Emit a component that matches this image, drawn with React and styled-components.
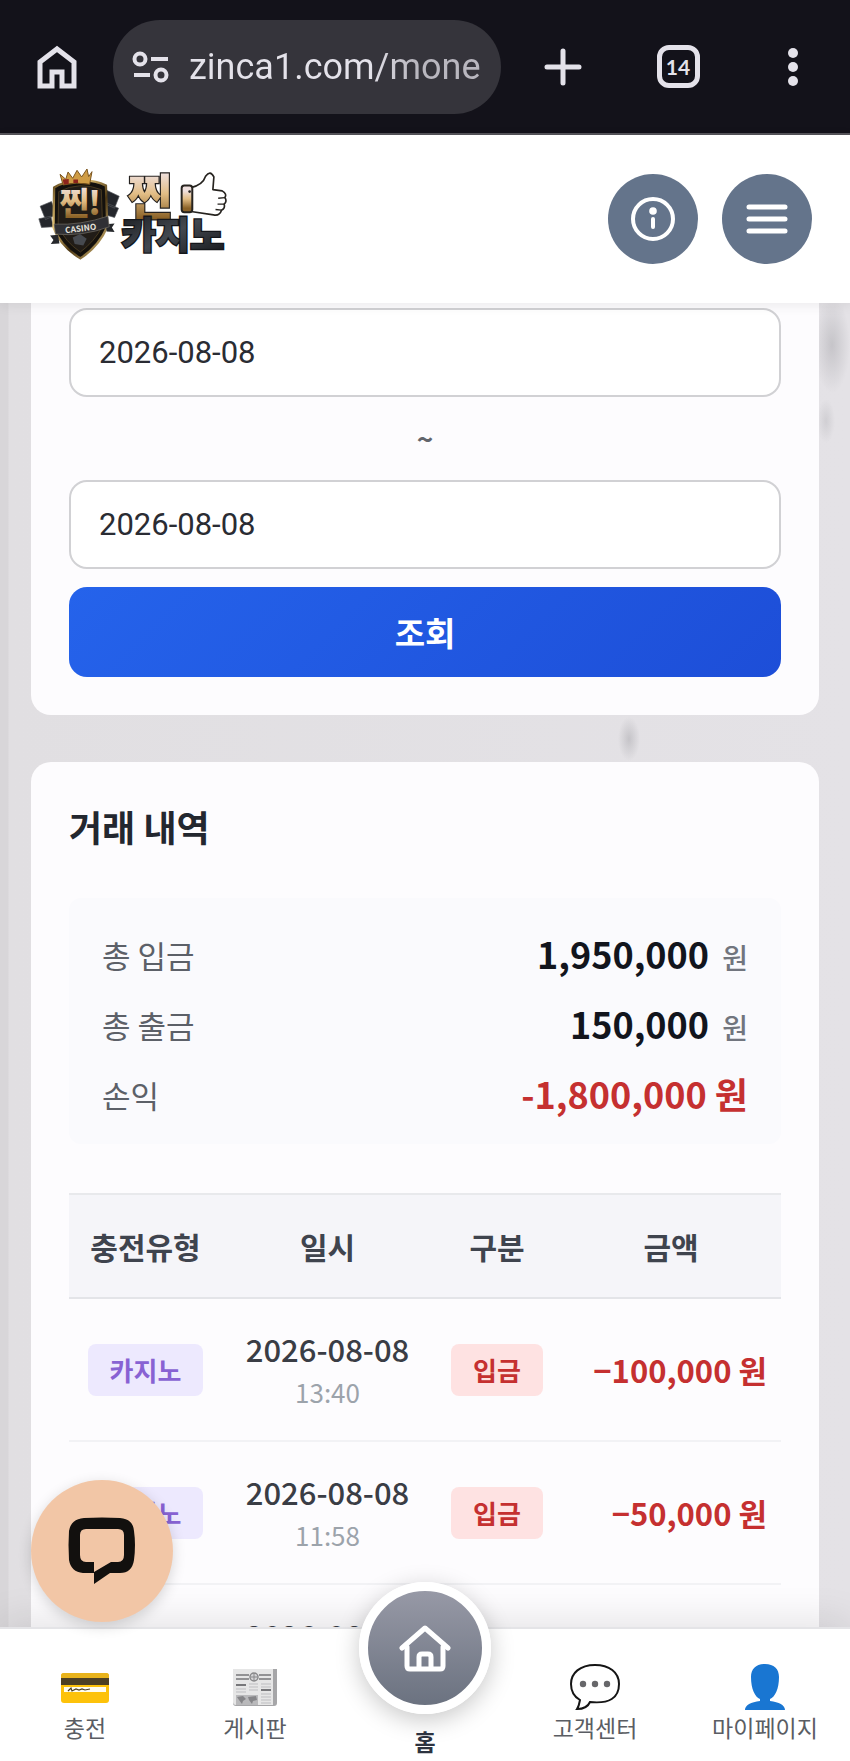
import React from 'react'
import styled, { createGlobalStyle } from 'styled-components'

const GlobalStyle = createGlobalStyle`
    * {
        box-sizing: border-box;
    }

    body {
        margin: 0;
        font-family: 'Noto Sans CJK KR', sans-serif;
        color: #23272f;
    }

    button, input {
        font-family: inherit;
    }
`

const Shell = styled.div`
    display: flex;
    flex-direction: column;
    height: 100vh;
    overflow: hidden;
`

const BrowserBar = styled.div`
    display: flex;
    flex-shrink: 0;
    align-items: center;
    height: 135px;
    padding: 0 35px;
    background: #13121a;
    border-bottom: 2px solid #55545a;
`

const BarButton = styled.button`
    display: flex;
    flex-shrink: 0;
    align-items: center;
    justify-content: center;
    width: 44px;
    height: 48px;
    padding: 0;
    border: none;
    background: none;
    color: #e4e2ea;
`

const AddressBar = styled.label`
    display: flex;
    flex: 1;
    align-items: center;
    gap: 20px;
    min-width: 0;
    height: 94px;
    margin: 0 40px 0 34px;
    padding: 0 12px 0 19px;
    border-radius: 47px;
    background: #35343b;
    color: #e4e2ea;
`

const Address = styled.input`
    flex: 1;
    min-width: 0;
    padding: 0;
    border: none;
    outline: none;
    background: linear-gradient(90deg, #e4e2ea 60%, #b9b7bf 75%);
    background-clip: text;
    color: transparent;
    font-family: Roboto, sans-serif;
    font-size: 36px;
    line-height: 48px;
`

const BarActions = styled.div`
    display: flex;
    justify-content: space-between;
    width: 274px;
`

const TabCount = styled.span`
    display: flex;
    align-items: center;
    justify-content: center;
    width: 43px;
    height: 43px;
    border: 5px solid #e4e2ea;
    border-radius: 12px;
    font-family: Lato, sans-serif;
    font-size: 21px;
    font-weight: 700;
`

const Header = styled.header`
    display: flex;
    z-index: 1;
    flex-shrink: 0;
    align-items: center;
    justify-content: space-between;
    height: 168px;
    padding: 0 38px 0 36px;
    background: #ffffff;
    box-shadow: 0 2px 12px rgba(0, 0, 0, 0.08);
`

const LogoLink = styled.a`
    display: flex;
    margin-bottom: 12px;
`

const HeaderActions = styled.div`
    display: flex;
    gap: 24px;
`

const RoundButton = styled.button`
    display: flex;
    align-items: center;
    justify-content: center;
    width: 90px;
    height: 90px;
    padding: 0;
    border: none;
    border-radius: 50%;
    background: #64748b;
`

const Main = styled.main`
    display: flex;
    flex: 1;
    flex-direction: column;
    gap: 47px;
    min-height: 0;
    overflow: hidden;
    padding: 0 31px;
    background:
        radial-gradient(ellipse 18px 48px at 832px 42px, rgba(120, 120, 126, 0.28), transparent),
        radial-gradient(ellipse 9px 22px at 826px 118px, rgba(120, 120, 126, 0.18), transparent),
        radial-gradient(ellipse 11px 22px at 629px 436px, rgba(120, 120, 126, 0.28), transparent),
        linear-gradient(90deg, #d8d6d9 8px, #e1dfe2 9px, #e4e2e6);
`

const Card = styled.section`
    flex-shrink: 0;
    padding: ${props => (props.$cut ? '5px 38px 38px' : '38px')};
    border-radius: ${props => (props.$cut ? '0 0 20px 20px' : '20px')};
    background: #fdfcfe;
`

const DateInput = styled.input`
    display: block;
    width: 100%;
    height: 89px;
    padding: 0 28px;
    border: 2px solid #d1d1d4;
    border-radius: 18px;
    outline: none;
    background: #ffffff;
    color: #2a2c33;
    font-family: Roboto, sans-serif;
    font-size: 31px;
`

const Tilde = styled.div`
    height: 83px;
    color: #62656c;
    font-size: 28px;
    font-weight: 700;
    line-height: 83px;
    text-align: center;
`

const SearchButton = styled.button`
    width: 100%;
    height: 90px;
    margin-top: 18px;
    border: none;
    border-radius: 18px;
    background: linear-gradient(135deg, #2563eb, #1d4ed8);
    color: #ffffff;
    font-size: 33px;
    font-weight: 700;
`

const Title = styled.h2`
    margin: 0 0 46px;
    color: #23272f;
    font-size: 36px;
    font-weight: 700;
    line-height: 52px;
`

const Summary = styled.dl`
    margin: 0 0 49px;
    padding: 20px 33px 16px;
    border-radius: 12px;
    background: #fafafd;
`

const SummaryRow = styled.div`
    display: flex;
    align-items: center;
    justify-content: space-between;
    height: 70px;
`

const SummaryLabel = styled.dt`
    padding-top: 2px;
    color: #5c6068;
    font-size: 31px;
`

const SummaryValue = styled.dd`
    margin: 0;
    color: ${props => (props.$loss ? '#c53030' : '#12151d')};
    font-size: 36px;
    font-weight: 700;
`

const Unit = styled.span`
    margin-left: 5px;
    color: #71757e;
    font-size: 28px;
    font-weight: 500;
`

const Table = styled.table`
    width: 100%;
    border-collapse: collapse;
    table-layout: fixed;
`

const HeadCell = styled.th`
    width: ${props => props.$width};
    height: 104px;
    padding: 0;
    border-top: 2px solid #e8e9ec;
    border-bottom: 2px solid #e3e4e8;
    background: #f5f5f9;
    color: #3f444e;
    font-size: 30px;
    font-weight: 700;
`

const Cell = styled.td`
    height: 143px;
    padding: ${props => (props.$end ? '0 14px 0 0' : '0')};
    border-bottom: 2px solid #f2f2f5;
    text-align: ${props => (props.$end ? 'right' : 'center')};
    white-space: nowrap;
`

const Badge = styled.span`
    display: inline-block;
    padding: 0 22px;
    border-radius: 8px;
    background: ${props => (props.$deposit ? '#fee2e2' : '#ede9fe')};
    color: ${props => (props.$deposit ? '#c53030' : '#8862d3')};
    font-size: 26px;
    font-weight: 700;
    line-height: 52px;
`

const DateText = styled.div`
    color: #3a3d45;
    font-size: 31px;
    font-weight: 500;
    line-height: 44px;
`

const TimeText = styled.div`
    color: #9ca3ab;
    font-size: 26px;
    line-height: 42px;
`

const Amount = styled.span`
    color: #c53030;
    font-size: 31px;
    font-weight: 700;
`

const ChatButton = styled.button`
    position: fixed;
    bottom: 139px;
    left: 31px;
    z-index: 2;
    display: flex;
    align-items: center;
    justify-content: center;
    width: 142px;
    height: 142px;
    padding: 0;
    border: none;
    border-radius: 50%;
    background: #f2c6a6;
    box-shadow: 0 4px 14px rgba(0, 0, 0, 0.16);
`

const BottomNav = styled.nav`
    display: grid;
    z-index: 1;
    flex-shrink: 0;
    grid-template-columns: repeat(5, 1fr);
    height: 134px;
    border-top: 2px solid #e4e4e7;
    background: #ffffff;
    box-shadow: 0 -6px 36px rgba(0, 0, 0, 0.1);
`

const NavItem = styled.a`
    display: flex;
    flex-direction: column;
    align-items: center;
    margin-top: ${props => (props.$active ? '-47px' : '35px')};
    color: ${props => (props.$active ? '#2d3340' : '#5a5d63')};
    font-size: 23px;
    font-weight: ${props => (props.$active ? 700 : 400)};
    line-height: 34px;
    text-decoration: none;
`

const HomeCircle = styled.span`
    display: flex;
    align-items: center;
    justify-content: center;
    width: 132px;
    height: 132px;
    margin-bottom: 10px;
    border: 9px solid #ffffff;
    border-radius: 50%;
    background: linear-gradient(#9799a6, #6b7280);
    box-shadow: 0 6px 24px rgba(0, 0, 0, 0.22);
`

const BarHomeIcon = () => (
    <svg width="40" height="44" viewBox="0 0 40 44" fill="none" stroke="currentColor" strokeWidth="5">
        <path d="M3 41V17L20 4l17 13v24H25V27H15v14z" />
    </svg>
)

const TuneIcon = () => (
    <svg width="37" height="32" viewBox="0 0 37 32" fill="none" stroke="currentColor" strokeWidth="4">
        <circle cx="8" cy="8" r="5.5" />
        <path d="M19 8h17M2 24h16" />
        <circle cx="29" cy="24" r="5.5" />
    </svg>
)

const PlusIcon = () => (
    <svg width="38" height="38" viewBox="0 0 38 38" stroke="currentColor" strokeWidth="5" strokeLinecap="round">
        <path d="M19 3v32M3 19h32" />
    </svg>
)

const DotsIcon = () => (
    <svg width="10" height="40" viewBox="0 0 10 40" fill="currentColor">
        <circle cx="5" cy="6" r="5" />
        <circle cx="5" cy="20" r="5" />
        <circle cx="5" cy="34" r="5" />
    </svg>
)

const InfoIcon = () => (
    <svg width="44" height="44" viewBox="0 0 44 44" fill="none" stroke="#ffffff" strokeWidth="4" strokeLinecap="round">
        <circle cx="22" cy="22" r="20" />
        <path d="M22 22v8" />
        <circle cx="22" cy="14" r="3.8" fill="#ffffff" stroke="none" />
    </svg>
)

const MenuIcon = () => (
    <svg width="42" height="30" viewBox="0 0 42 30" stroke="#ffffff" strokeWidth="5" strokeLinecap="round">
        <path d="M3 3h36M3 15h36M3 27h36" />
    </svg>
)

const HouseIcon = () => (
    <svg width="52" height="48" viewBox="0 0 52 48" fill="none" stroke="#ffffff" strokeWidth="5" strokeLinecap="round" strokeLinejoin="round">
        <path d="M3 24L26 4l23 20" />
        <path d="M8 23v19q0 3 3 3h30q3 0 3-3V23" />
        <path d="M20 44V33q0-3 3-3h6q3 0 3 3v11" />
    </svg>
)

const ChatIcon = () => (
    <svg width="68" height="68" viewBox="0 0 68 68">
        <path
            d="M16 1Q34 0 52 1Q65 2 66 14Q68 28 66 43Q64 56 52 56H42L26 67V56H15Q3 55 1 43Q0 28 1 14Q3 2 16 1Z"
            fill="#12100e"
        />
        <path d="M18 12H50Q56 12 56 18V38Q56 45 50 45H43L26 55V45H18Q12 45 12 38V18Q12 12 18 12Z" fill="#f2c6a6" />
    </svg>
)

const CardIcon = () => (
    <svg width="48" height="46" viewBox="0 0 48 46">
        <rect x="0" y="9" width="48" height="30" rx="3" fill="#fdc20a" />
        <path d="M0 15v-3q0-3 3-3h42q3 0 3 3v3z" fill="#e8b31c" />
        <path d="M0 14h48v7H0z" fill="#4d4024" />
        <path d="M3 23h42v5H3z" fill="#fffdf0" />
        <path d="M7 27l3-3 1 3 4-2 3 1 3-1 3 1 5-1" fill="none" stroke="#4d4024" strokeWidth="1.2" />
    </svg>
)

const NewsIcon = () => (
    <svg width="48" height="46" viewBox="0 0 48 46">
        <path d="M3 5h43v34q0 3-3 3H5q-3 0-3-3z" fill="#a6a6a8" />
        <path d="M2 5h40v36H5q-3 0-3-3z" fill="#e6e6e6" />
        <path d="M5 11h13M5 15h13M28 11h12M28 15h12" stroke="#929294" strokeWidth="2" />
        <circle cx="23" cy="13" r="4" fill="#d4d4d6" stroke="#88888a" strokeWidth="1.5" />
        <path d="M20 13h6M23 9v8" stroke="#88888a" />
        <path d="M5 21h10M30 26h10" stroke="#77777a" strokeWidth="2" />
        <path d="M18 20h9M18 23h9M18 26h9M30 20h10M30 23h10M5 25h10M5 28h10M30 30h10M30 33h10M30 36h10M30 39h10" stroke="#bdbdc0" />
        <path d="M5 31h22v10H5z" fill="#b9b9bb" />
        <path d="M6 33l6-1 3 3-3 2-1 3-3-4zM17 33l8-1 1 4-4 1-1 3-3-4z" fill="#858588" />
    </svg>
)

const SpeechIcon = () => (
    <svg width="50" height="46" viewBox="0 0 50 46">
        <path d="M25 1C10 1 1 9 1 20q0 11 9 16-1 6-3 9 10 0 13-7 29 3 29-18C49 8 39 1 25 1z" fill="#ffffff" stroke="#151515" strokeWidth="2" />
        <circle cx="13" cy="20" r="3.2" fill="#67676a" />
        <circle cx="25" cy="20" r="3.2" fill="#67676a" />
        <circle cx="37" cy="20" r="3.2" fill="#67676a" />
    </svg>
)

const PersonIcon = () => (
    <svg width="48" height="46" viewBox="0 0 48 46" fill="#1976d2">
        <path d="M24 0c9 0 14 5 14 13 0 12-4 20-9 22v2c9 1 15 4 15 9H4c0-5 6-8 15-9v-2c-5-2-9-10-9-22C10 5 15 0 24 0z" />
    </svg>
)

const Logo = () => (
    <svg
        width="193"
        height="93"
        viewBox="50 50 580 280"
        overflow="visible"
        fontFamily="'Noto Sans CJK KR', sans-serif"
        fontWeight="900"
    >
        <defs>
            <linearGradient id="gold" x1="0" y1="0" x2="0" y2="1">
                <stop offset="0.2" stopColor="#efe0de" />
                <stop offset="0.5" stopColor="#e2bd85" />
                <stop offset="0.85" stopColor="#8b6227" />
            </linearGradient>
            <linearGradient id="rim" x1="0" y1="0" x2="1" y2="1">
                <stop offset="0" stopColor="#5c4418" />
                <stop offset="0.3" stopColor="#e9c777" />
                <stop offset="0.6" stopColor="#4d3814" />
                <stop offset="1" stopColor="#edcf86" />
            </linearGradient>
            <linearGradient id="steel" x1="0" y1="0" x2="1" y2="1">
                <stop offset="0" stopColor="#15171b" />
                <stop offset="0.5" stopColor="#43484f" />
                <stop offset="1" stopColor="#111216" />
            </linearGradient>
        </defs>
        <g fill="#24262b" stroke="#55575c" strokeWidth="2">
            <path d="M62 168l34-14 16 40-34 14zM58 206l36-8 8 32-36 2z" />
            <path d="M262 120l38 18-14 36-36-16zM256 156l42 18-12 28-34-10z" />
        </g>
        <path d="M104 112Q140 90 180 92Q224 88 260 106L264 230Q238 290 183 325Q122 288 102 232Z" fill="#14110d" stroke="url(#rim)" strokeWidth="7" />
        <path d="M118 124Q180 92 246 118L250 228Q224 276 183 306Q138 276 116 228Z" fill="#211c17" stroke="#5f4b27" strokeWidth="2" />
        <path d="M122 72l17 15 7-22 14 19 13-24 14 20 16-24 5 23 10-15-7 38q-40-8-80 2z" fill="#cf9c45" stroke="#7a541e" strokeWidth="3" />
        <path d="M130 88l18-2v15l-15 2zM162 88h14v10h-14z" fill="#8c241c" />
        <text x="121" y="194" fontSize="96" fill="url(#gold)">찐</text>
        <text x="207" y="194" fontSize="96" fill="url(#gold)">!</text>
        <path d="M92 256l24-2 4 26-26 2 8-12zM260 222l26-2-8 12 8 14-24-2z" fill="#26282c" />
        <path d="M104 222Q184 226 266 198L270 230Q188 260 108 252Z" fill="#303034" stroke="#77736a" strokeWidth="2" />
        <text x="137" y="244" fontSize="25" fontWeight="700" fill="#e6e2dc" transform="rotate(-7 185 236)">CASINO</text>
        <path d="M160 262l22-10 20 14-10 20-26-4z" fill="#46494f" />
        <text x="326" y="194" fontSize="146" fill="url(#gold)" stroke="#24211f" strokeWidth="7" paintOrder="stroke">찐</text>
        <text x="307" y="298" fontSize="112" fill="url(#steel)" stroke="#14161a" strokeWidth="8" paintOrder="stroke">카지노</text>
        <path d="M516 112Q552 104 560 78Q574 58 585 80L582 118L610 122Q626 132 618 142Q626 154 616 162Q620 174 608 180Q602 198 584 194L516 184Z" fill="#ffffff" stroke="#26231f" strokeWidth="5" strokeLinejoin="round" />
        <path d="M618 142l-20 2M616 162l-20 0M608 180l-18-2" stroke="#26231f" strokeWidth="4" />
        <rect x="488" y="106" width="32" height="80" rx="8" fill="url(#gold)" stroke="#26231f" strokeWidth="6" />
        <circle cx="512" cy="124" r="4" fill="#26231f" />
    </svg>
)

const transactions = [
    { id: 1, type: '카지노', date: '2026-08-08', time: '13:40', kind: '입금', amount: '−100,000 원' },
    { id: 2, type: '카지노', date: '2026-08-08', time: '11:58', kind: '입금', amount: '−50,000 원' },
    { id: 3, type: '카지노', date: '2026-08-08', time: '11:58', kind: '입금', amount: '−50,000 원' },
]

const TransactionRow = ({ item }) => (
    <tr>
        <Cell><Badge>{item.type}</Badge></Cell>
        <Cell>
            <DateText>{item.date}</DateText>
            <TimeText>{item.time}</TimeText>
        </Cell>
        <Cell><Badge $deposit>{item.kind}</Badge></Cell>
        <Cell $end><Amount>{item.amount}</Amount></Cell>
    </tr>
)

const App = () => {
    return (
        <Shell>
            <GlobalStyle />
            <BrowserBar>
                <BarButton aria-label="홈페이지"><BarHomeIcon /></BarButton>
                <AddressBar>
                    <TuneIcon />
                    <Address aria-label="주소" defaultValue="zinca1.com/mone" />
                </AddressBar>
                <BarActions>
                    <BarButton aria-label="새 탭"><PlusIcon /></BarButton>
                    <BarButton aria-label="탭 목록"><TabCount>14</TabCount></BarButton>
                    <BarButton aria-label="더보기"><DotsIcon /></BarButton>
                </BarActions>
            </BrowserBar>

            <Header>
                <LogoLink href="#" aria-label="찐카지노"><Logo /></LogoLink>
                <HeaderActions>
                    <RoundButton aria-label="안내"><InfoIcon /></RoundButton>
                    <RoundButton aria-label="메뉴"><MenuIcon /></RoundButton>
                </HeaderActions>
            </Header>

            <Main>
                <Card $cut>
                    <DateInput aria-label="시작일" defaultValue="2026-08-08" />
                    <Tilde>~</Tilde>
                    <DateInput aria-label="종료일" defaultValue="2026-08-08" />
                    <SearchButton>조회</SearchButton>
                </Card>

                <Card>
                    <Title>거래 내역</Title>
                    <Summary>
                        <SummaryRow>
                            <SummaryLabel>총 입금</SummaryLabel>
                            <SummaryValue>1,950,000 <Unit>원</Unit></SummaryValue>
                        </SummaryRow>
                        <SummaryRow>
                            <SummaryLabel>총 출금</SummaryLabel>
                            <SummaryValue>150,000 <Unit>원</Unit></SummaryValue>
                        </SummaryRow>
                        <SummaryRow>
                            <SummaryLabel>손익</SummaryLabel>
                            <SummaryValue $loss>-1,800,000 원</SummaryValue>
                        </SummaryRow>
                    </Summary>
                    <Table>
                        <thead>
                            <tr>
                                <HeadCell $width="153px">충전유형</HeadCell>
                                <HeadCell $width="211px">일시</HeadCell>
                                <HeadCell $width="128px">구분</HeadCell>
                                <HeadCell>금액</HeadCell>
                            </tr>
                        </thead>
                        <tbody>
                            {transactions.map(item => <TransactionRow key={item.id} item={item} />)}
                        </tbody>
                    </Table>
                </Card>
            </Main>

            <ChatButton aria-label="채팅 상담"><ChatIcon /></ChatButton>

            <BottomNav>
                <NavItem href="#charge"><CardIcon />충전</NavItem>
                <NavItem href="#board"><NewsIcon />게시판</NavItem>
                <NavItem href="#home" $active>
                    <HomeCircle><HouseIcon /></HomeCircle>
                    홈
                </NavItem>
                <NavItem href="#support"><SpeechIcon />고객센터</NavItem>
                <NavItem href="#mypage"><PersonIcon />마이페이지</NavItem>
            </BottomNav>
        </Shell>
    )
}

export default App
